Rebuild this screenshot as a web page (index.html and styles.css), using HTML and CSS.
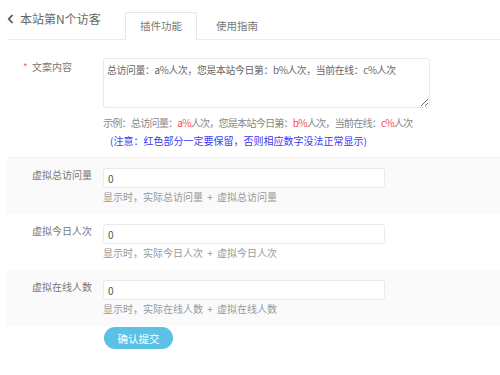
FILE: index.html
```html
<!DOCTYPE html>
<html lang="zh-CN">
<head>
<meta charset="utf-8">
<title>本站第N个访客</title>
<link rel="stylesheet" href="styles.css">
</head>
<body>
<div class="page">
  <div class="header">
    <div class="title">
      <svg class="back" width="7" height="10" viewBox="0 0 7 10"><polyline points="5.5,1 1.8,5 5.5,9" fill="none" stroke="#555" stroke-width="1.8"/></svg>
      <span>本站第N个访客</span>
    </div>
    <div class="tabs">
      <div class="tab active">插件功能</div>
      <div class="tab">使用指南</div>
    </div>
  </div>

  <div class="row row-first">
    <div class="label"><span class="star">*</span><span>文案内容</span></div>
    <div class="field">
      <textarea class="textarea">总访问量：a%人次，您是本站今日第：b%人次，当前在线：c%人次</textarea>
      <div class="example">示例：总访问量：<span class="red">a%</span>人次，您是本站今日第：<span class="red">b%</span>人次，当前在线：<span class="red">c%</span>人次</div>
      <div class="note">(注意：红色部分一定要保留，否则相应数字没法正常显示)</div>
    </div>
  </div>

  <div class="row row-gray">
    <div class="label"><span class="star"></span><span>虚拟总访问量</span></div>
    <div class="field">
      <input class="input" type="text" value="0">
      <div class="help">显示时，实际总访问量 + 虚拟总访问量</div>
    </div>
  </div>

  <div class="row">
    <div class="label"><span class="star"></span><span>虚拟今日人次</span></div>
    <div class="field">
      <input class="input" type="text" value="0">
      <div class="help">显示时，实际今日人次 + 虚拟今日人次</div>
    </div>
  </div>

  <div class="row row-gray">
    <div class="label"><span class="star"></span><span>虚拟在线人数</span></div>
    <div class="field">
      <input class="input" type="text" value="0">
      <div class="help">显示时，实际在线人数 + 虚拟在线人数</div>
    </div>
  </div>

  <div class="actions">
    <button class="submit" type="button">确认提交</button>
  </div>
</div>
</body>
</html>
```

FILE: styles.css
```css
* { box-sizing: border-box; }
html, body { margin: 0; padding: 0; background: #fff; }
body {
  font-family: "Noto Sans CJK SC", "Noto Sans", sans-serif;
  color: #666;
  font-size: 10px;
}
.page { padding-left: 7px; }

.header {
  display: flex;
  align-items: flex-end;
  height: 40px;
  border-bottom: 1px solid #ececec;
}
.title {
  width: 118px;
  align-self: stretch;
  display: flex;
  align-items: center;
  gap: 6px;
  font-size: 12px;
  color: #666;
  padding-bottom: 2px;
}
.back { display: block; }
.tabs { display: flex; gap: 4px; }
.tab {
  padding: 0 14px;
  height: 27px;
  line-height: 26px;
  font-size: 10.5px;
  color: #777;
  border: 1px solid transparent;
  border-bottom: none;
  margin-bottom: -1px;
}
.tab.active {
  border-color: #e6e6e6;
  border-radius: 3px 3px 0 0;
  background: #fff;
  height: 28px;
}

.row {
  display: flex;
  padding: 10px 0;
}
.row-first {
  padding: 18px 0 9px 0;
  border-bottom: 1px solid #efefef;
}
.row-gray { background: #fafafa; }

.label {
  width: 96px;
  flex: none;
  display: flex;
  padding-left: 16px;
  line-height: 14px;
  font-size: 10px;
  color: #777;
}
.row-first .label { padding-top: 2px; }
.star {
  width: 9px;
  color: #ff6a3d;
  font-size: 10px;
}
.field { display: flex; flex-direction: column; }

.textarea {
  display: block;
  width: 327px;
  height: 50px;
  border: 1px solid #e8e8e8;
  border-radius: 3px;
  padding: 4px 3px;
  font-family: inherit;
  font-size: 9.8px;
  letter-spacing: -0.3px;
  line-height: 14px;
  color: #666;
  background: #fff;
  resize: vertical;
  margin: 0;
}
.example {
  margin-top: 7px;
  font-size: 10.2px;
  letter-spacing: -0.9px;
  line-height: 15px;
  color: #888;
}
.red { color: #ff4d4f; }
.note {
  margin-top: 3px;
  padding-left: 7px;
  font-size: 10px;
  line-height: 15px;
  color: #3a3af2;
}

.input {
  display: block;
  width: 282px;
  height: 20px;
  border: 1px solid #ebebeb;
  border-radius: 3px;
  padding: 0 4px;
  font-family: inherit;
  font-size: 10px;
  color: #555;
  background: #fff;
  margin: 0;
  outline: none;
}
.help {
  margin-top: 2px;
  font-size: 10px;
  line-height: 14px;
  color: #999;
  word-spacing: 2px;
}

.actions { padding: 1px 0 0 97px; }
.submit {
  width: 69px;
  height: 22px;
  border: none;
  border-radius: 11px;
  background: #5bc1e7;
  color: #fff;
  font-family: inherit;
  font-size: 10.5px;
  padding: 0;
}
```
